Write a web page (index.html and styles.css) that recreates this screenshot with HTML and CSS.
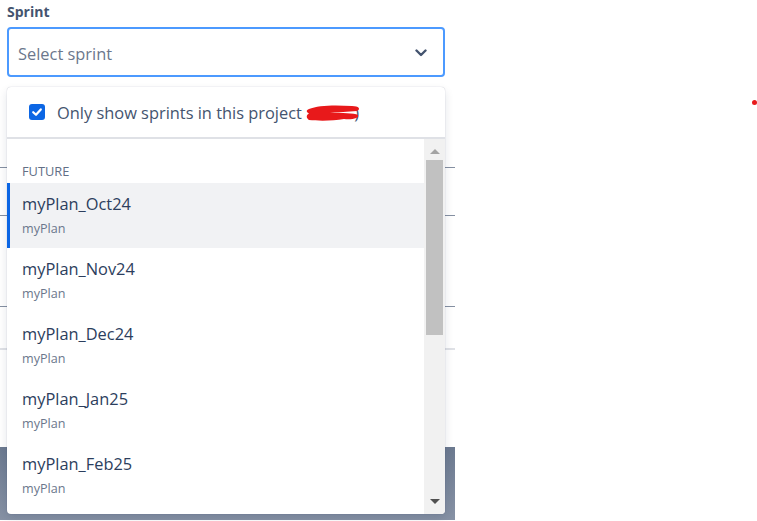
FILE: index.html
```html
<!DOCTYPE html>
<html>
<head>
<meta charset="utf-8">
<link rel="stylesheet" href="styles.css">
</head>
<body>
<div class="page">
  <div class="field">
    <div class="label">Sprint</div>
    <div class="select">
      <span class="placeholder">Select sprint</span>
      <svg class="chevron" width="12" height="8" viewBox="0 0 12 8"><path d="M1.5 1.5 L6 6 L10.5 1.5" fill="none" stroke="#44546f" stroke-width="2.4" stroke-linecap="round" stroke-linejoin="round"/></svg>
    </div>
  </div>
  <div class="bg bg1"></div>
  <div class="bg bg2"></div>
  <div class="bg bg3"></div>
  <div class="bg bg4"></div>
  <div class="bg bg5"></div>
  <div class="footer"></div>

  <div class="menu">
    <div class="menu-head">
      <span class="checkbox">
        <svg width="16" height="16" viewBox="0 0 16 16"><rect x="0" y="0" width="16" height="16" rx="3" fill="#0c66e4"/><path d="M4.2 8.2 L7 10.8 L11.8 5.4" fill="none" stroke="#fff" stroke-width="2.2" stroke-linecap="round" stroke-linejoin="round"/></svg>
      </span>
      <span class="head-text">Only show sprints in this project <span class="redact"><svg width="56" height="18" viewBox="0 0 56 18"><path d="M3 5 C12 1 30 1 46 2 C53 2 55 5 51 7 C42 8 32 8 24 8.5 C36 9 48 9 52 11 C54 14 46 16 38 15 C27 17 12 17 3 16 C0 14 0 11 3 9.5 C0 8 0 6 3 5 Z" fill="#e8191b"/></svg></span>)</span>
    </div>
    <div class="menu-body">
      <div class="list">
        <div class="group">Future</div>
        <div class="item selected">
          <div class="title">myPlan_Oct24</div>
          <div class="sub">myPlan</div>
        </div>
        <div class="item">
          <div class="title">myPlan_Nov24</div>
          <div class="sub">myPlan</div>
        </div>
        <div class="item">
          <div class="title">myPlan_Dec24</div>
          <div class="sub">myPlan</div>
        </div>
        <div class="item">
          <div class="title">myPlan_Jan25</div>
          <div class="sub">myPlan</div>
        </div>
        <div class="item">
          <div class="title">myPlan_Feb25</div>
          <div class="sub">myPlan</div>
        </div>
      </div>
      <div class="scrollbar">
        <div class="arrow up"></div>
        <div class="thumb"></div>
        <div class="track-rest"></div>
        <div class="arrow down"></div>
      </div>
    </div>
  </div>
</div>
<div class="dot"></div>
</body>
</html>
```

FILE: styles.css
```css
* { box-sizing: border-box; }
html, body { margin: 0; padding: 0; background: #fff; }
body {
  font-family: "Open Sans", "Noto Sans", sans-serif;
  color: #172b4d;
  width: 757px;
  height: 521px;
  overflow: hidden;
  position: relative;
}
.page {
  width: 455px;
  position: relative;
}
.field {
  padding: 2px 10px 0 7px;
}
.label {
  font-size: 14px;
  font-weight: 700;
  color: #44546f;
  line-height: 20px;
  height: 25px;
}
.select {
  height: 50px;
  border: 2px solid #4c9aff;
  border-radius: 4px;
  display: flex;
  align-items: center;
  justify-content: space-between;
  padding: 0 16px 0 9px;
}
.placeholder {
  font-size: 16.4px;
  color: #6b778c;
  margin-top: 2px;
}
.chevron { display: block; margin-top: 1px; }

.bg { border-bottom: 1px solid #8590a2; }
.bg1 { height: 91px; }
.bg2 { height: 48px; }
.bg3 { height: 91px; }
.bg4 { height: 43px; border-bottom: 2px solid #dfe1e6; }
.bg5 { height: 97px; border-bottom: none; }
.footer {
  height: 73px;
  background: linear-gradient(#6c7a90, #8792a5);
}

.menu {
  position: absolute;
  left: 7px;
  top: 87px;
  width: 438px;
  height: 427px;
  background: #fff;
  border-radius: 4px;
  box-shadow: 0 0 1px rgba(9,30,66,0.31), 0 4px 10px rgba(9,30,66,0.12);
  overflow: hidden;
  display: flex;
  flex-direction: column;
}
.menu-head {
  height: 52px;
  display: flex;
  align-items: center;
  padding-left: 22px;
  gap: 12px;
  border-bottom: 2px solid #dfe1e6;
  flex-shrink: 0;
}
.checkbox { display: block; height: 16px; margin-top: -1px; }
.checkbox svg { display: block; }
.head-text {
  font-size: 16.4px;
  color: #44546f;
  white-space: nowrap;
  margin-top: 1px;
}
.redact {
  display: inline-block;
  width: 48px;
  height: 16px;
  vertical-align: -2px;
  position: relative;
}
.redact svg { position: absolute; left: 0; top: -1px; }

.menu-body {
  flex: 1;
  display: flex;
  min-height: 0;
}
.list {
  flex: 1;
  overflow: hidden;
}
.group {
  padding: 23px 15px 3px;
  font-size: 12.8px;
  line-height: 18px;
  text-transform: uppercase;
  color: #626f86;
}
.item {
  height: 65px;
  padding: 10px 15px 0;
}
.item.selected {
  background: #f1f2f4;
  box-shadow: inset 3px 0 0 #0c66e4;
}
.title {
  font-size: 16.4px;
  line-height: 22px;
  color: #2c3e5d;
}
.sub {
  margin-top: 5px;
  font-size: 12.6px;
  line-height: 18px;
  color: #6b778c;
}
.scrollbar {
  width: 21px;
  background: #f1f1f1;
  display: flex;
  flex-direction: column;
  align-items: center;
  flex-shrink: 0;
}
.arrow {
  width: 0;
  height: 0;
  border-left: 5px solid transparent;
  border-right: 5px solid transparent;
}
.arrow.up {
  border-bottom: 5px solid #a3a3a3;
  margin-top: 10px;
  margin-bottom: 6px;
}
.thumb {
  width: 17px;
  height: 175px;
  background: #c1c1c1;
}
.track-rest { flex: 1; }
.arrow.down {
  border-top: 5px solid #505050;
  margin-bottom: 10px;
}
.dot {
  position: absolute;
  left: 752px;
  top: 100px;
  width: 5px;
  height: 5px;
  border-radius: 50%;
  background: #e8191b;
}
```
